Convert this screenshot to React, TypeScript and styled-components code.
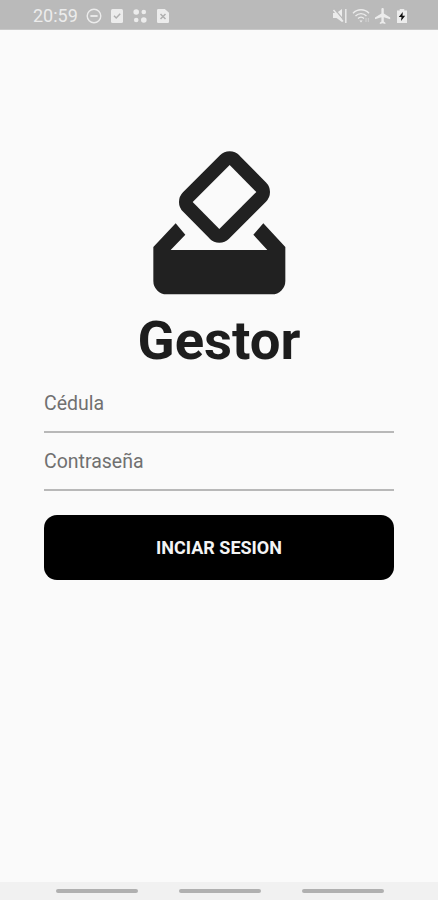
import React from "react";
import styled, { createGlobalStyle } from "styled-components";

const GlobalStyle = createGlobalStyle`
  * { box-sizing: border-box; }
  body { margin: 0; background: #fafafa; font-family: Roboto, sans-serif; }
`;

const Screen = styled.div`
  display: flex;
  flex-direction: column;
  height: 900px;
  background: #fafafa;
`;

const StatusBar = styled.header`
  display: flex;
  align-items: center;
  justify-content: space-between;
  height: 30px;
  padding: 2px 30px 0 33px;
  background: #bababa;
  border-bottom: 1px solid #c8c8c8;
  color: #ececec;
`;

const StatusGroup = styled.div<{ $gap: number }>`
  display: flex;
  align-items: center;
  gap: ${(p) => p.$gap}px;
  svg { display: block; }
`;

const Clock = styled.span`
  width: 45px;
  font-size: 18px;
  line-height: 20px;
  white-space: nowrap;
`;

const Content = styled.main`
  flex: 1;
  display: flex;
  flex-direction: column;
  align-items: center;
  padding: 120px 44px 0;
`;

const Logo = styled.svg`
  display: block;
  width: 133px;
  height: 145px;
`;

const Title = styled.h1`
  margin: 14px 0 0;
  height: 66px;
  font-size: 54.5px;
  line-height: 62px;
  font-weight: 700;
  color: #1d1d1d;
`;

const Field = styled.div`
  width: 100%;
  height: 58px;
  padding-top: 17px;
  border-bottom: 2px solid #b8b8b8;
  font-size: 19.5px;
  line-height: 24px;
  color: #707070;
`;

const Submit = styled.button`
  width: 350px;
  height: 65px;
  margin-top: 24px;
  padding: 0;
  border: 0;
  border-radius: 13px;
  background: #000;
  color: #f4f4f4;
  font: 700 18px/24px Roboto, sans-serif;
`;

const NavBar = styled.footer`
  display: flex;
  justify-content: center;
  gap: 41px;
  height: 18px;
  padding: 7px 0 0 1px;
  background: #f1f1f1;
`;

const NavHandle = styled.span`
  width: 82px;
  height: 4px;
  border-radius: 2px;
  background: #b0b0b0;
`;

export default function App() {
  return (
    <Screen>
      <GlobalStyle />
      <StatusBar>
        <StatusGroup $gap={8}>
          <Clock>20:59</Clock>
          <svg width="16" height="16" viewBox="0 0 16 16" fill="none" stroke="currentColor" strokeWidth="1.4">
            <circle cx="8" cy="8" r="6.8" />
            <path d="M4.4 8h7.2" strokeWidth="1.8" />
          </svg>
          <svg width="14" height="16" viewBox="0 0 14 16">
            <rect x="1" y="1" width="12" height="14" rx="1.5" fill="currentColor" />
            <path d="M4 7.8l2.2 2.2 4-4.2" fill="none" stroke="#b0b0b0" strokeWidth="1.5" />
          </svg>
          <svg width="16" height="16" viewBox="0 0 16 16" fill="currentColor">
            <circle cx="4.2" cy="4" r="2.8" />
            <circle cx="11.8" cy="4" r="2.3" />
            <circle cx="4.2" cy="12" r="2.3" />
            <circle cx="11.8" cy="12" r="2.8" />
          </svg>
          <svg width="14" height="16" viewBox="0 0 14 16">
            <path d="M2.2 1h6.6L13 4.8v9A1.2 1.2 0 0 1 11.8 15H2.2A1.2 1.2 0 0 1 1 13.8V2.2A1.2 1.2 0 0 1 2.2 1z" fill="currentColor" />
            <path d="M4.5 6l5 5m0-5l-5 5" stroke="#b0b0b0" strokeWidth="1.5" />
          </svg>
        </StatusGroup>
        <StatusGroup $gap={5}>
          <svg width="15" height="16" viewBox="0 0 15 16">
            <path d="M1 5h3.500L10 1v13l-5.500-4H1z" fill="currentColor" />
            <path d="M2.500 1L12 12.500" stroke="#bababa" strokeWidth="1.200" />
            <path d="M1.500 2L11 13.500M13.800 1v14" stroke="currentColor" strokeWidth="1.400" />
          </svg>
          <svg width="18" height="16" viewBox="0 0 18 16" fill="none" stroke="currentColor" strokeWidth="1.4">
            <path d="M1 5.2c4.500-4.600 11.500-4.600 16 0M3.500 8c3.200-3.200 7.800-3.200 11 0M6 10.600c1.800-1.800 4.200-1.800 6 0" />
            <path d="M7.400 12.400h3.200L9 14.500z" fill="currentColor" stroke="none" />
            <path d="M14 10v4M16.300 10v4" strokeWidth="0.8" opacity=".6" />
          </svg>
          <svg width="16" height="16" viewBox="2 2 20 20" fill="currentColor">
            <path d="M21 16v-2l-8-5V3.500c0-.83-.67-1.500-1.500-1.500S10 2.670 10 3.500V9l-8 5v2l8-2.500V19l-2 1.500V22l3.500-1 3.500 1v-1.500L13 19v-5.500l8 2.500z" />
          </svg>
          <svg width="12" height="16" viewBox="0 0 12 16">
            <path d="M3.700 1h4.600v1.500H11V15H1V2.500h2.700z" fill="currentColor" />
            <path d="M6.800 4L2.800 9h2.700l-.5 4 4.200-5.200H6.500z" fill="#111" />
          </svg>
        </StatusGroup>
      </StatusBar>
      <Content>
        <Logo viewBox="69 29 399 435">
          <path d="M299 74L379 155 268 266 188 185z" fill="#212121" stroke="#212121" strokeWidth="82" strokeLinejoin="round" />
          <path d="M299 74L379 155 268 266 188 185z" fill="#fafafa" />
          <path d="M137 249L166 283 122 329H412L370 283 400 249 466 320V422A40 40 0 0 1 426 462H110A40 40 0 0 1 70 422V320z" fill="#212121" />
        </Logo>
        <Title>Gestor</Title>
        <Field>Cédula</Field>
        <Field>Contraseña</Field>
        <Submit type="button">INCIAR SESION</Submit>
      </Content>
      <NavBar>
        <NavHandle />
        <NavHandle />
        <NavHandle />
      </NavBar>
    </Screen>
  );
}
